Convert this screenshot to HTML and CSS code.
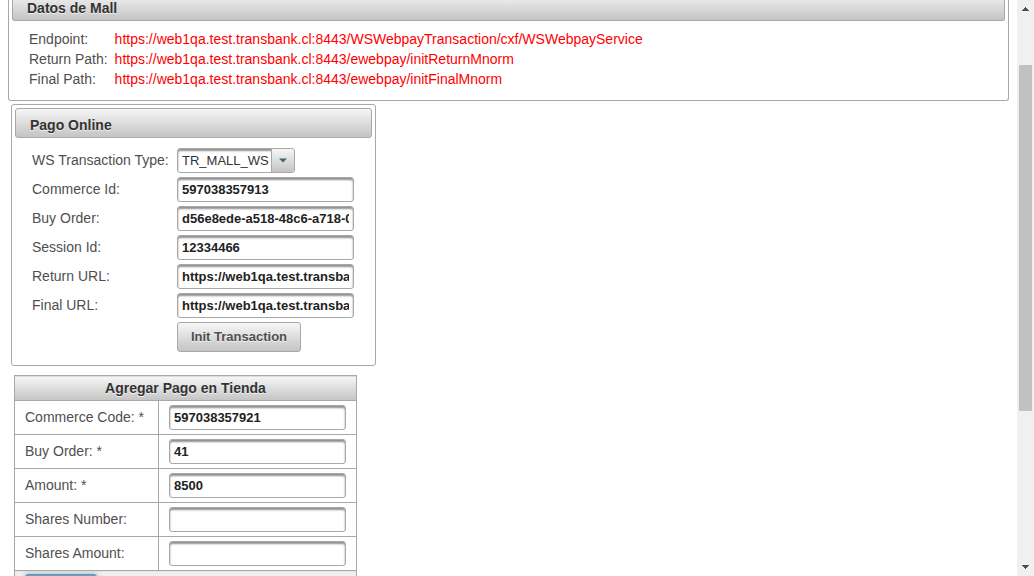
FILE: index.html
```html
<!DOCTYPE html>
<html lang="es">
<head>
<meta charset="utf-8">
<title>Pago Mall</title>
<link rel="stylesheet" href="styles.css">
</head>
<body>
<div class="viewport">
  <main class="page">
    <section class="panel mall">
      <h2 class="panel-title mall-title">Datos de Mall</h2>
      <dl class="paths">
        <dt>Endpoint:</dt><dd>https://web1qa.test.transbank.cl:8443/WSWebpayTransaction/cxf/WSWebpayService</dd>
        <dt>Return Path:</dt><dd>https://web1qa.test.transbank.cl:8443/ewebpay/initReturnMnorm</dd>
        <dt>Final Path:</dt><dd>https://web1qa.test.transbank.cl:8443/ewebpay/initFinalMnorm</dd>
      </dl>
    </section>

    <form class="panel online">
      <h2 class="panel-title online-title">Pago Online</h2>
      <div class="fields">
        <label for="type">WS Transaction Type:</label>
        <div class="select-box">
          <select id="type" class="select"><option>TR_MALL_WS</option></select>
          <span class="select-arrow"><svg width="8" height="5" viewBox="0 0 8 5"><path d="M0 0.5H8L4 4.5Z" fill="#38667f"/></svg></span>
        </div>
        <label for="commerce">Commerce Id:</label><input class="text" id="commerce" type="text" value="597038357913">
        <label for="order">Buy Order:</label><input class="text" id="order" type="text" value="d56e8ede-a518-48c6-a718-0">
        <label for="session">Session Id:</label><input class="text" id="session" type="text" value="12334466">
        <label for="return">Return URL:</label><input class="text" id="return" type="text" value="https://web1qa.test.transbank.cl:8443/ewebpay/initReturnMnorm">
        <label for="final">Final URL:</label><input class="text" id="final" type="text" value="https://web1qa.test.transbank.cl:8443/ewebpay/initFinalMnorm">
        <button class="button" type="button">Init Transaction</button>
      </div>
    </form>

    <table class="store">
      <thead><tr><th colspan="2">Agregar Pago en Tienda</th></tr></thead>
      <tbody>
        <tr><td><label for="code">Commerce Code: *</label></td><td><input class="text" id="code" type="text" value="597038357921"></td></tr>
        <tr><td><label for="store-order">Buy Order: *</label></td><td><input class="text" id="store-order" type="text" value="41"></td></tr>
        <tr><td><label for="amount">Amount: *</label></td><td><input class="text" id="amount" type="text" value="8500"></td></tr>
        <tr><td><label for="shares">Shares Number:</label></td><td><input class="text" id="shares" type="text"></td></tr>
        <tr><td><label for="shares-amount">Shares Amount:</label></td><td><input class="text" id="shares-amount" type="text"></td></tr>
      </tbody>
      <tfoot><tr><td colspan="2"><button class="add" type="button" aria-label="Agregar"></button></td></tr></tfoot>
    </table>
  </main>
  <div class="scrollbar" aria-hidden="true">
    <svg class="scroll-arrow" width="17" height="17" viewBox="0 0 17 17" shape-rendering="crispEdges"><path d="M8 7h1v1h1v1h1v1h1v1H5v-1h1V9h1V8h1z" fill="#505050"/></svg>
    <div class="track"><div class="space-before"></div><div class="thumb"></div><div class="space-after"></div></div>
    <svg class="scroll-arrow" width="17" height="17" viewBox="0 0 17 17" shape-rendering="crispEdges"><path d="M5 6h7v1h-1v1h-1v1H9v1H8V9H7V8H6V7H5z" fill="#505050"/></svg>
  </div>
</div>
</body>
</html>
```
FILE: styles.css
```css
* { box-sizing: border-box; }

body {
  margin: 0;
  background: #fff;
  color: #4f4f4f;
  font: 14px/20px "Liberation Sans", Arial, sans-serif;
}

.viewport {
  display: flex;
  height: 100vh;
  overflow: hidden;
}

.page {
  flex: 1;
  min-width: 0;
  padding: 0 8px;
}

.panel {
  border: 1px solid #a8a8a8;
  border-radius: 3px;
  padding: 3px;
}

.panel-title {
  margin: 0;
  border: 1px solid #a8a8a8;
  border-radius: 3px;
  background: linear-gradient(#f6f6f6, #c4c4c4);
  color: #333;
  font-size: 14px;
  line-height: 18px;
  text-shadow: 0 1px 0 rgba(255, 255, 255, 0.7);
}

.mall {
  border-top: 0;
  border-radius: 0 0 3px 3px;
  padding-top: 0;
}

.mall-title {
  border-top: 0;
  border-radius: 0 0 3px 3px;
  background: linear-gradient(#e8e8e8, #c4c4c4);
  padding: 0 14px 4px;
  line-height: 16px;
}

.paths {
  display: grid;
  grid-template-columns: max-content 1fr;
  column-gap: 7px;
  margin: 0;
  padding: 8px 17px;
}

.paths dd {
  margin: 0;
  color: #f00;
}

.online {
  width: 365px;
  margin: 3px 0 0 3px;
}

.online-title {
  padding: 7px 14px 3px;
}

.fields {
  display: grid;
  grid-template-columns: 141px max-content;
  gap: 4px;
  align-items: start;
  padding: 10px 17px;
}

.fields label { line-height: 25px; white-space: nowrap; }

.text,
.select-box {
  border: 1px solid #a8a8a8;
  border-radius: 3px;
  background: #fff;
  color: #222;
  box-shadow: inset 0 2px 2px #8f8f8f;
}

.text {
  display: block;
  width: 177px;
  height: 25px;
  padding: 4px;
  font: bold 13px/15px "Liberation Sans", Arial, sans-serif;
}

.select-box {
  display: grid;
  grid-template-columns: 1fr 23px;
  width: 118px;
  height: 25px;
}

.select {
  grid-area: 1 / 1 / 2 / 3;
  appearance: none;
  width: 100%;
  border: 0;
  background: transparent;
  padding: 0 4px;
  color: #333;
  font: 13px/20px "Liberation Sans", Arial, sans-serif;
}

.select-arrow {
  grid-area: 1 / 2 / 2 / 3;
  display: grid;
  place-items: center;
  border-left: 1px solid #a8a8a8;
  border-radius: 0 2px 2px 0;
  background: linear-gradient(#f6f6f6, #c4c4c4);
  pointer-events: none;
}

.button {
  grid-column: 2;
  justify-self: start;
  width: 124px;
  height: 30px;
  border: 1px solid #a8a8a8;
  border-radius: 3px;
  background: linear-gradient(#f6f6f6, #c4c4c4);
  padding: 0;
  color: #4f4f4f;
  font: bold 13px/20px "Liberation Sans", Arial, sans-serif;
  text-shadow: 0 1px 0 rgba(255, 255, 255, 0.7);
}

.store {
  margin: 9px 0 0 6px;
  border-collapse: collapse;
}

.store th,
.store td {
  border: 1px solid #a8a8a8;
  padding: 4px 10px;
}

.store tbody td:first-child {
  width: 144px;
  padding: 4px 10px 6px;
}

.store th {
  background: linear-gradient(#f6f6f6, #c4c4c4);
  padding: 2px 10px;
  color: #333;
  text-shadow: 0 1px 0 rgba(255, 255, 255, 0.7);
}

.store tfoot td {
  background: linear-gradient(#f0f0f0, #d8d8d8);
  padding-top: 3px;
}

.add {
  display: block;
  width: 72px;
  height: 30px;
  border: 1px solid #6f93a8;
  border-radius: 3px;
  background: linear-gradient(#6f9fba, #38667f);
  box-shadow: 0 0 5px #85b2cb;
}

.scrollbar {
  display: flex;
  flex-direction: column;
  width: 17px;
  background: #f0f0f0;
}

.scroll-arrow { display: block; }

.track {
  display: flex;
  flex: 1;
  flex-direction: column;
  padding: 0 2px;
}

.space-before { flex: 48; }
.thumb { flex: 346; background: #c1c1c1; }
.space-after { flex: 148; }
```
